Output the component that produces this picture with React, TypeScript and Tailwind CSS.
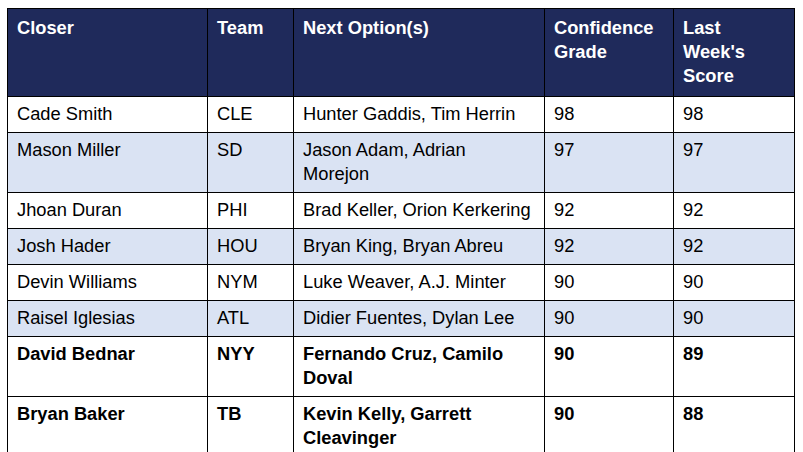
import React from "react";

type Row = {
  closer: string;
  team: string;
  next: string;
  grade: number;
  last: number;
  bold?: boolean;
};

const rows: Row[] = [
  { closer: "Cade Smith", team: "CLE", next: "Hunter Gaddis, Tim Herrin", grade: 98, last: 98 },
  { closer: "Mason Miller", team: "SD", next: "Jason Adam, Adrian Morejon", grade: 97, last: 97 },
  { closer: "Jhoan Duran", team: "PHI", next: "Brad Keller, Orion Kerkering", grade: 92, last: 92 },
  { closer: "Josh Hader", team: "HOU", next: "Bryan King, Bryan Abreu", grade: 92, last: 92 },
  { closer: "Devin Williams", team: "NYM", next: "Luke Weaver, A.J. Minter", grade: 90, last: 90 },
  { closer: "Raisel Iglesias", team: "ATL", next: "Didier Fuentes, Dylan Lee", grade: 90, last: 90 },
  { closer: "David Bednar", team: "NYY", next: "Fernando Cruz, Camilo Doval", grade: 90, last: 89, bold: true },
  { closer: "Bryan Baker", team: "TB", next: "Kevin Kelly, Garrett Cleavinger", grade: 90, last: 88, bold: true },
];

const th = "border border-black pl-[9px] pr-[10px] pt-[7px] pb-[8px] text-left align-top font-bold text-white";
const td = "border border-black pl-[9px] pr-[10px] pt-[5px] pb-[6px] text-left align-top";

export default function App() {
  return (
    <div
      className="h-[452px] w-[803px] overflow-hidden bg-white pl-[7px] pt-[8px] text-[18.3px] leading-[24px] text-black"
      style={{ fontFamily: '"Liberation Sans", Arial, sans-serif' }}
    >
      <table className="w-[787px] table-fixed border-collapse">
        <colgroup>
          <col className="w-[200px]" />
          <col className="w-[86px]" />
          <col className="w-[251px]" />
          <col className="w-[129px]" />
          <col className="w-[121px]" />
        </colgroup>
        <thead>
          <tr className="bg-[#1f2a5b]">
            <th className={th}>Closer</th>
            <th className={th}>Team</th>
            <th className={th}>Next Option(s)</th>
            <th className={th}>Confidence Grade</th>
            <th className={th}>Last Week's Score</th>
          </tr>
        </thead>
        <tbody>
          {rows.map((r, i) => (
            <tr
              key={r.closer}
              className={`${i % 2 === 1 && !r.bold ? "bg-[#dae3f3]" : "bg-white"} ${r.bold ? "font-bold" : ""}`}
            >
              <td className={td}>{r.closer}</td>
              <td className={td}>{r.team}</td>
              <td className={td}>{r.next}</td>
              <td className={td}>{r.grade}</td>
              <td className={td}>{r.last}</td>
            </tr>
          ))}
        </tbody>
      </table>
    </div>
  );
}
